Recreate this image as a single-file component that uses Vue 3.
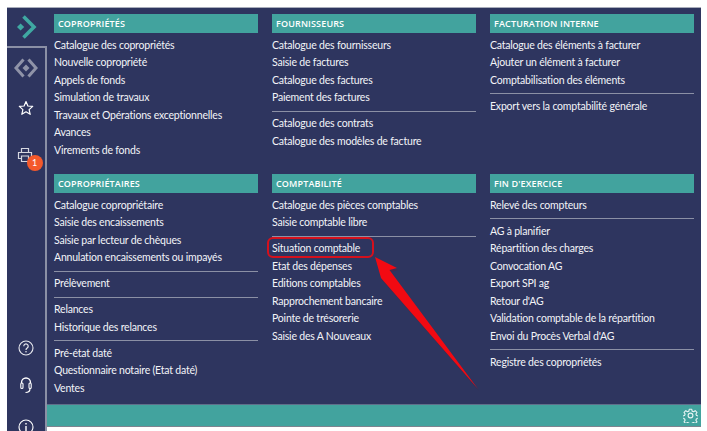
<script setup>
const sections = [
  { title: 'COPROPRIÉTÉS', groups: [['Catalogue des copropriétés', 'Nouvelle copropriété', 'Appels de fonds', 'Simulation de travaux', 'Travaux et Opérations exceptionnelles', 'Avances', 'Virements de fonds']] },
  { title: 'FOURNISSEURS', groups: [['Catalogue des fournisseurs', 'Saisie de factures', 'Catalogue des factures', 'Paiement des factures'], ['Catalogue des contrats', 'Catalogue des modèles de facture']] },
  { title: 'FACTURATION INTERNE', groups: [['Catalogue des éléments à facturer', 'Ajouter un élément à facturer', 'Comptabilisation des éléments'], ['Export vers la comptabilité générale']] },
  { title: 'COPROPRIÉTAIRES', groups: [['Catalogue copropriétaire', 'Saisie des encaissements', 'Saisie par lecteur de chèques', 'Annulation encaissements ou impayés'], ['Prélèvement'], ['Relances', 'Historique des relances'], ['Pré-état daté', 'Questionnaire notaire (Etat daté)', 'Ventes']] },
  { title: 'COMPTABILITÉ', groups: [['Catalogue des pièces comptables', 'Saisie comptable libre'], ['Situation comptable', 'Etat des dépenses', 'Editions comptables', 'Rapprochement bancaire', 'Pointe de trésorerie', 'Saisie des A Nouveaux']] },
  { title: "FIN D'EXERCICE", groups: [['Relevé des compteurs'], ['AG à planifier', 'Répartition des charges', 'Convocation AG', 'Export SPI ag', "Retour d'AG", 'Validation comptable de la répartition', "Envoi du Procès Verbal d'AG"], ['Registre des copropriétés']] },
]
</script>

<template>
  <div class="screen">
    <div class="panel">
      <aside class="side">
        <div class="logo">
          <svg width="24" height="26" viewBox="0 0 24 26">
            <path d="M2 13l3.600-3.600L9.200 13l-3.600 3.600z" fill="#3fa8a2" />
            <path d="M8.500 2.500l10.500 10.500L8.500 23.500" fill="none" stroke="#3fa8a2" stroke-width="3.600" />
          </svg>
        </div>
        <div class="tools">
          <svg class="t1" width="24" height="22" viewBox="0 0 24 22">
            <path d="M9.500 2.500L2 11l7.500 8.500M14.500 2.500L22 11l-7.500 8.500" fill="none" stroke="#8f93a8" stroke-width="3" />
            <path d="M12 7.500l3.500 3.500-3.500 3.500-3.500-3.500z" fill="#8f93a8" />
          </svg>
          <svg class="t2" width="16" height="16" viewBox="0 0 16 16">
            <path d="M8 1.500l1.900 4.500 4.800.4-3.600 3.200 1.100 4.700L8 11.800l-4.200 2.500 1.100-4.700-3.600-3.200 4.800-.4z" fill="none" stroke="#fff" stroke-width="1.200" stroke-linejoin="round" />
          </svg>
          <div class="printer">
            <svg width="16" height="16" viewBox="0 0 16 16">
              <path d="M4.500 5V1.500h7V5M4 11.500H1.500V5.500h13v6H12M4.500 9h7v5.500h-7z" fill="none" stroke="#d5d7e0" stroke-width="1.200" />
            </svg>
            <span class="badge">1</span>
          </div>
          <div class="spacer"></div>
          <svg class="t4" width="16" height="16" viewBox="0 0 16 16">
            <circle cx="8" cy="8" r="7" fill="none" stroke="#e8e9ef" stroke-width="1.100" />
            <path d="M5.800 6.200a2.200 2.200 0 1 1 3.400 1.800c-.8.500-1.200 1-1.200 2" fill="none" stroke="#e8e9ef" stroke-width="1.200" />
            <circle cx="8" cy="11.800" r=".8" fill="#e8e9ef" />
          </svg>
          <svg class="t5" width="12" height="17" viewBox="0 0 12 17">
            <path d="M1.500 6V5.500a4.500 4.500 0 0 1 9 0V6" fill="none" stroke="#fff" stroke-width="1.300" />
            <rect x=".8" y="6" width="2.200" height="5.500" rx="1" fill="none" stroke="#fff" stroke-width="1.100" />
            <rect x="9" y="6" width="2.200" height="5.500" rx="1" fill="none" stroke="#fff" stroke-width="1.100" />
            <path d="M10 11.500c0 2.500-1.500 4-4.500 4" fill="none" stroke="#fff" stroke-width="1.200" />
          </svg>
          <svg class="t6" width="16" height="16" viewBox="0 0 16 16">
            <circle cx="8" cy="8" r="7" fill="none" stroke="#fff" stroke-width="1.100" />
            <path d="M8 7v5M8 4v1.500" stroke="#fff" stroke-width="1.400" />
          </svg>
        </div>
      </aside>
      <div class="content">
        <main class="grid">
          <section v-for="s in sections" :key="s.title" class="col">
            <h2>{{ s.title }}</h2>
            <div v-for="(g, i) in s.groups" :key="i" class="group">
              <a v-for="item in g" :key="item">{{ item }}</a>
            </div>
          </section>
        </main>
        <footer class="foot">
          <svg width="15" height="15" viewBox="0 0 24 24">
            <path d="M10 2h4l.6 3 2.300 1 2.600-1.700 2.800 2.800-1.700 2.600 1 2.300 3 .6v4l-3 .6-1 2.300 1.700 2.600-2.800 2.800-2.600-1.700-2.300 1-.6 3h-4l-.6-3-2.300-1-2.600 1.700-2.800-2.800 1.700-2.600-1-2.300-3-.6v-4l3-.6 1-2.300-1.700-2.600 2.800-2.800 2.600 1.700 2.300-1z" fill="none" stroke="#e6f4f3" stroke-width="1.800" stroke-linejoin="round" />
            <circle cx="12" cy="12" r="3.800" fill="none" stroke="#e6f4f3" stroke-width="1.800" />
          </svg>
        </footer>
      </div>
    </div>
    <div class="highlight"></div>
    <svg class="arrow" width="707" height="431" viewBox="0 0 707 431">
      <polygon points="375,257 397,268 389.500,270 478,389 381,278" fill="#7a1020" opacity=".3" transform="translate(1,2)" />
      <polygon points="375,257 397,268 389.500,270 478,389 381,278" fill="#f20a12" />
    </svg>
  </div>
</template>

<style scoped>
.screen { position: relative; width: 707px; height: 431px; overflow: hidden; background: #fff; font-family: Lato, "Open Sans", sans-serif; }
.panel { display: flex; margin: 7px 6px 0 7px; height: 424px; box-sizing: border-box; border-top: 1px solid #a9adbb; }
.side { width: 40px; flex: none; display: flex; flex-direction: column; background: #2e355f; }
.logo { height: 38px; display: flex; align-items: center; justify-content: center; }
.tools { flex: 1; border-top: 2px solid #8b90a5; border-right: 2px solid #8b90a5; display: flex; flex-direction: column; align-items: center; box-sizing: border-box; }
.t1 { margin-top: 9px; }
.t2 { margin-top: 21px; }
.printer { position: relative; margin-top: 31px; margin-right: 3px; height: 16px; }
.badge { position: absolute; left: 10px; top: 8px; width: 16px; height: 16px; border-radius: 50%; background: #f4592b; color: #fff; font-size: 9px; line-height: 16px; text-align: center; }
.spacer { flex: 1; }
.t4 { margin-bottom: 21px; }
.t5 { margin-bottom: 25px; }
.t6 { margin-bottom: -4px; }
.content { flex: 1; display: flex; flex-direction: column; min-width: 0; }
.grid { flex: 1; padding: 6px 7px 0 7px; display: grid; grid-template-columns: repeat(3, 204px); grid-template-rows: 160px auto; column-gap: 14px; background: #2e355f; }
h2 { margin: 0 0 3.500px; height: 19px; line-height: 19px; padding-left: 4px; background: #42a39e; color: #fff; font-family: "Open Sans", sans-serif; font-size: 9px; font-weight: 600; letter-spacing: .15px; }
.group + .group { margin-top: 4px; padding-top: 3.500px; border-top: 1px solid #8b90a5; }
a { display: block; height: 17.500px; line-height: 17.500px; color: #f3f4f8; font-size: 10.500px; letter-spacing: -.2px; white-space: nowrap; }
.foot { height: 23px; margin-bottom: 4px; background: #42a39e; display: flex; justify-content: flex-end; align-items: center; padding-right: 3px; border-top: 1px solid #5f6f8a; border-bottom: 1px solid #7d8590; box-sizing: border-box; }
.highlight { position: absolute; left: 267px; top: 237px; width: 107px; height: 21px; box-sizing: border-box; border: 2px solid #d5101c; border-radius: 6px; }
.arrow { position: absolute; left: 0; top: 0; pointer-events: none; }
</style>
